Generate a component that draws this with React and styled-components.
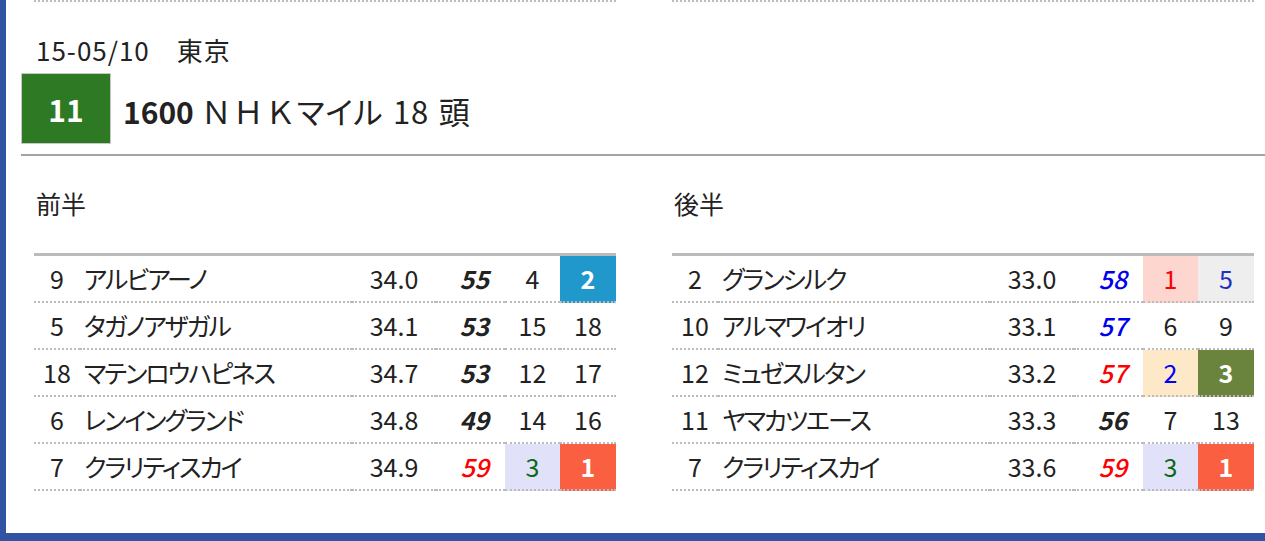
import React from "react";
import styled, { createGlobalStyle } from "styled-components";

const Global = createGlobalStyle`
  html, body { margin: 0; padding: 0; }
  body {
    background: #3253a2;
    font-family: "Noto Sans CJK JP", "Open Sans", sans-serif;
    color: #222;
    overflow: hidden;
  }
`;

const Page = styled.div`
  margin-left: 6px;
  height: 533px;
  background: #fff;
  overflow: hidden;
`;

const Columns = styled.div`
  display: grid;
  grid-template-columns: 582px 582px;
  column-gap: 56px;
  padding-left: 28px;
`;

const PrevEnd = styled.div`
  border-top: 2px dotted #bbb;
`;

const RaceHeader = styled.div`
  padding-left: 15px;
`;

const DateLine = styled.div`
  margin-top: 30px;
  padding-left: 15px;
  font-size: 26px;
  letter-spacing: 1px;
  line-height: 36px;
  height: 36px;
`;

const TitleRow = styled.div`
  margin-top: 5px;
  display: flex;
  align-items: center;
  gap: 12px;
`;

const RaceNo = styled.div`
  width: 88px;
  height: 69px;
  border: 1px solid #c8c8c8;
  background: #2e7a24;
  color: #fff;
  font-weight: 700;
  font-size: 30px;
  display: flex;
  align-items: center;
  justify-content: center;
`;

const Title = styled.div`
  font-size: 31px;
  font-feature-settings: "palt";
  padding-top: 4px;
  white-space: nowrap;
`;

const Dist = styled.b`
  font-size: 30px;
  font-weight: 700;
`;

const Wide = styled.span`
  font-feature-settings: normal;
  letter-spacing: 1px;
`;

const Rest = styled.span`
  letter-spacing: 0.8px;
  word-spacing: 2px;
`;

const Divider = styled.div`
  margin-top: 10px;
  border-bottom: 2px solid #a3a3a3;
`;

const Heading = styled.div`
  margin-top: 29px;
  padding-left: 2px;
  font-size: 25px;
  line-height: 36px;
  height: 36px;
  margin-bottom: 32px;
`;

const Table = styled.div`
  border-top: 3px solid #bbb;
`;

const Row = styled.div`
  display: grid;
  grid-template-columns: 46px 272px 84px 69px 55px 56px;
`;

const Cell = styled.div`
  height: 45px;
  line-height: 45px;
  font-size: 25px;
  border-bottom: 2px dotted #bbb;
  white-space: nowrap;
  text-align: ${(p) => p.$align || "center"};
  padding: ${(p) => p.$pad || "0"};
`;

const Name = styled(Cell)`
  font-feature-settings: "palt";
  letter-spacing: -2px;
`;

const Score = styled(Cell)`
  font-style: italic;
  font-weight: ${(p) => (p.$c ? 500 : 700)};
  color: ${(p) => p.$c || "#222"};
`;

const Rank = styled(Cell)`
  background: ${(p) => p.$bg || "transparent"};
  color: ${(p) => p.$fg || "#222"};
  font-weight: ${(p) => (p.$bold ? 700 : 400)};
`;

const S = {
  blue: { $bg: "#2198cb", $fg: "#fff", $bold: true },
  tomato: { $bg: "#f95f40", $fg: "#fff", $bold: true },
  olive: { $bg: "#6b843d", $fg: "#fff", $bold: true },
  lav: { $bg: "#e1e1fa", $fg: "#0a6a12" },
  pink: { $bg: "#fdd6d0", $fg: "#f00" },
  gray: { $bg: "#eeeeee", $fg: "#2030c0" },
  peach: { $bg: "#fde8c8", $fg: "#00f" },
};

const first = [
  ["9", "アルビアーノ", "34.0", "55", null, ["4"], ["2", S.blue]],
  ["5", "タガノアザガル", "34.1", "53", null, ["15"], ["18"]],
  ["18", "マテンロウハピネス", "34.7", "53", null, ["12"], ["17"]],
  ["6", "レンイングランド", "34.8", "49", null, ["14"], ["16"]],
  ["7", "クラリティスカイ", "34.9", "59", "#f00", ["3", S.lav], ["1", S.tomato]],
];

const second = [
  ["2", "グランシルク", "33.0", "58", "#0000ee", ["1", S.pink], ["5", S.gray]],
  ["10", "アルマワイオリ", "33.1", "57", "#0000ee", ["6"], ["9"]],
  ["12", "ミュゼスルタン", "33.2", "57", "#f00", ["2", S.peach], ["3", S.olive]],
  ["11", "ヤマカツエース", "33.3", "56", null, ["7"], ["13"]],
  ["7", "クラリティスカイ", "33.6", "59", "#f00", ["3", S.lav], ["1", S.tomato]],
];

function Section({ title, rows }) {
  return (
    <div>
      <Heading>{title}</Heading>
      <Table>
        {rows.map(([no, name, time, score, sc, r1, r2], i) => (
          <Row key={i}>
            <Cell>{no}</Cell>
            <Name $align="left" $pad="0 0 0 4px">{name}</Name>
            <Cell>{time}</Cell>
            <Score $c={sc} $align="right" $pad="0 16px 0 0">{score}</Score>
            <Rank {...(r1[1] || {})}>{r1[0]}</Rank>
            <Rank {...(r2[1] || {})}>{r2[0]}</Rank>
          </Row>
        ))}
      </Table>
    </div>
  );
}

export default function App() {
  return (
    <>
      <Global />
      <Page>
        <Columns>
          <PrevEnd />
          <PrevEnd />
        </Columns>
        <RaceHeader>
          <DateLine>15-05/10　東京</DateLine>
          <TitleRow>
            <RaceNo>11</RaceNo>
            <Title>
              <Dist>1600</Dist> <Wide>ＮＨＫ</Wide>
              <Rest>マイル 18 頭</Rest>
            </Title>
          </TitleRow>
          <Divider />
        </RaceHeader>
        <Columns>
          <Section title="前半" rows={first} />
          <Section title="後半" rows={second} />
        </Columns>
      </Page>
    </>
  );
}
